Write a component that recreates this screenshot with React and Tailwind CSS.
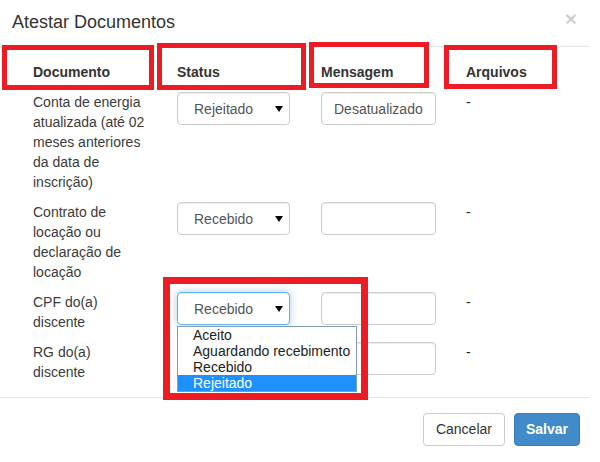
import React from 'react';

const rows = [
    { lines: ['Conta de energia', 'atualizada (até 02', 'meses anteriores', 'da data de', 'inscrição)'], status: 'Rejeitado', msg: 'Desatualizado' },
    { lines: ['Contrato de', 'locação ou', 'declaração de', 'locação'], status: 'Recebido', msg: '' },
    { lines: ['CPF do(a)', 'discente'], status: 'Recebido', msg: '', open: true },
    { lines: ['RG do(a)', 'discente'], status: null, msg: '' },
];

const options = ['Aceito', 'Aguardando recebimento', 'Recebido', 'Rejeitado'];

const Arrow = () => (
    <svg width="8" height="6" viewBox="0 0 8 6" className="block">
        <polygon points="0,0 8,0 4,6" fill="#000" />
    </svg>
);

const Select = ({ value, open }) => (
    <div className="relative w-[113px]">
        <div
            className={
                open
                    ? 'h-[33px] w-[113px] rounded-[4px] border border-[#66afe9] bg-white flex items-center justify-between pl-[16px] pr-[6px] text-[#555] shadow-[inset_0_1px_1px_rgba(0,0,0,.075),0_0_8px_rgba(102,175,233,.6)]'
                    : 'h-[33px] w-[113px] rounded-[4px] border border-[#ccc] bg-white flex items-center justify-between pl-[16px] pr-[6px] text-[#555] shadow-[inset_0_1px_1px_rgba(0,0,0,.075)]'
            }
        >
            <span>{value}</span>
            <Arrow />
        </div>
        {open && (
            <div className="absolute left-0 top-[34px] z-10 w-[180px] border border-[#7f9db9] bg-white text-[#222] leading-[16px]">
                {options.map(o => (
                    <div key={o} className={o === 'Rejeitado' ? 'pl-[15px] bg-[#1e90ff] text-white' : 'pl-[15px]'}>
                        {o}
                    </div>
                ))}
            </div>
        )}
    </div>
);

const App = () => {
    return (
        <div className="relative w-[600px] h-[462px] overflow-hidden bg-white text-[14px] text-[#3b3b3b] font-['Liberation_Sans',Arial,sans-serif]">
            <div className="w-[590px]">
                {/* header */}
                <div className="h-[47px] flex items-start justify-between border-b border-[#e5e5e5] pl-[12px] pr-[13px]">
                    <div className="pt-[12px] text-[18px] leading-[20px] text-[#333]">Atestar Documentos</div>
                    <div className="pt-[8px] text-[21px] leading-[21px] font-bold text-black/20">×</div>
                </div>

                {/* body */}
                <div className="pl-[25px] pt-[10px] pb-[10px]">
                    <div className="grid grid-cols-[144px_144px_145px_1fr] leading-[20px]">
                        <div className="px-[8px] py-[5px] font-bold text-[#333]">Documento</div>
                        <div className="px-[8px] py-[5px] font-bold text-[#333]">Status</div>
                        <div className="px-[8px] py-[5px] font-bold text-[#333]">Mensagem</div>
                        <div className="px-[8px] py-[5px] font-bold text-[#333]">Arquivos</div>

                        {rows.map((r, i) => (
                            <React.Fragment key={i}>
                                <div className="px-[8px] py-[5px] whitespace-nowrap">
                                    {r.lines.map(l => (
                                        <div key={l}>{l}</div>
                                    ))}
                                </div>
                                <div className={r.open ? 'px-[8px] py-[5px] relative z-10' : 'px-[8px] py-[5px]'}>
                                    {r.status && <Select value={r.status} open={r.open} />}
                                </div>
                                <div className="px-[8px] py-[5px]">
                                    <div className="h-[33px] w-[115px] rounded-[4px] border border-[#ccc] bg-white flex items-center px-[12px] text-[#555] shadow-[inset_0_1px_1px_rgba(0,0,0,.075)]">
                                        {r.msg}
                                    </div>
                                </div>
                                <div className="px-[8px] py-[5px] text-[#222]">-</div>
                            </React.Fragment>
                        ))}
                    </div>
                </div>

                {/* footer */}
                <div className="border-t border-[#e5e5e5] flex justify-end gap-[9px] pt-[15px] pr-[10px]">
                    <div className="h-[33px] px-[12px] flex items-center rounded-[4px] border border-[#ccc] bg-white text-[#333]">
                        Cancelar
                    </div>
                    <div className="h-[33px] px-[11px] flex items-center rounded-[4px] border border-[#357ebd] bg-[#428bca] text-white font-bold">
                        Salvar
                    </div>
                </div>
            </div>

            {/* red annotation boxes */}
            <div className="absolute left-[2px] top-[45px] w-[152px] h-[45px] border-[5px] border-[#ed1c24] z-20" />
            <div className="absolute left-[157px] top-[43px] w-[149px] h-[47px] border-[5px] border-[#ed1c24] z-20" />
            <div className="absolute left-[309px] top-[42px] w-[120px] h-[46px] border-[5px] border-[#ed1c24] z-20" />
            <div className="absolute left-[444px] top-[45px] w-[113px] h-[44px] border-[5px] border-[#ed1c24] z-20" />
            <div className="absolute left-[163px] top-[277px] w-[205px] h-[123px] border-[7px] border-[#ed1c24] z-20" />
        </div>
    );
};

export default App;
